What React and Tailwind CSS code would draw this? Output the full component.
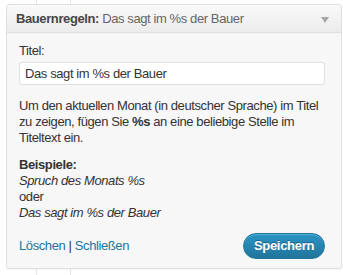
import React from "react";

const Widget = () => (
  <div className="relative z-10 ml-[6px] mt-[4px] w-[336px] h-[265px] rounded-[3px] border border-[#dfdfdf] bg-[#f7f7f7] shadow-[0_1px_1px_rgba(0,0,0,0.04)] flex flex-col">
    <div className="h-[28px] flex items-center justify-between pl-[9px] pr-[12px] border-b border-[#dfdfdf] bg-gradient-to-b from-[#f9f9f9] to-[#ececec] rounded-t-[3px]">
      <h3 className="text-[13px] text-[#464646]">
        <span className="font-bold">Bauernregeln:</span>{" "}
        <span className="text-[#666]">Das sagt im %s der Bauer</span>
      </h3>
      <span className="w-0 h-0 border-l-[4px] border-r-[4px] border-t-[6px] border-l-transparent border-r-transparent border-t-[#a8a8a8] mt-[2px]"></span>
    </div>

    <div className="flex-1 pl-[12px] pr-[16px] pt-[10px] text-[13px] leading-[16px] text-[#333]">
      <label className="block">Titel:</label>
      <input
        defaultValue="Das sagt im %s der Bauer"
        className="mt-[3px] block w-full h-[23px] px-[5px] rounded-[3px] border border-[#dfdfdf] bg-white text-[13px] tracking-[-0.4px] text-[#333] outline-none"
      />
      <p className="mt-[13px]">
        Um den aktuellen Monat (in deutscher Sprache) im Titel zu zeigen,
        fügen Sie <b>%s</b> an eine beliebige Stelle im Titeltext ein.
      </p>
      <p className="mt-[11px]">
        <b>Beispiele:</b>
        <br />
        <i>Spruch des Monats %s</i>
        <br />
        oder
        <br />
        <i>Das sagt im %s der Bauer</i>
      </p>
      <div className="mt-[12px] flex items-center justify-between">
        <div className="text-[#21759b]">
          <a href="#" className="text-[#21759b]">Löschen</a>
          <span className="text-[#333]"> | </span>
          <a href="#" className="text-[#21759b]">Schließen</a>
        </div>
        <button className="w-[82px] h-[26px] rounded-full border border-[#21759b] bg-gradient-to-b from-[#2a95c5] to-[#21759b] text-white font-bold text-[13px] tracking-[-0.3px] [text-shadow:0_-1px_0_rgba(0,0,0,0.3)] shadow-[inset_0_1px_0_rgba(120,200,230,0.5)]">
          Speichern
        </button>
      </div>
    </div>
  </div>
);

export default function App() {
  return (
    <div
      className="relative w-[343px] h-[275px] bg-white overflow-hidden tracking-[-0.4px]"
      style={{ fontFamily: '"Liberation Sans", Arial, sans-serif' }}
    >
      <div className="absolute left-[36px] top-0 h-full border-l border-[#e5e5e5]"></div>
      <div className="absolute left-[70px] top-0 h-full border-l border-[#e5e5e5]"></div>
      <Widget />
    </div>
  );
}
